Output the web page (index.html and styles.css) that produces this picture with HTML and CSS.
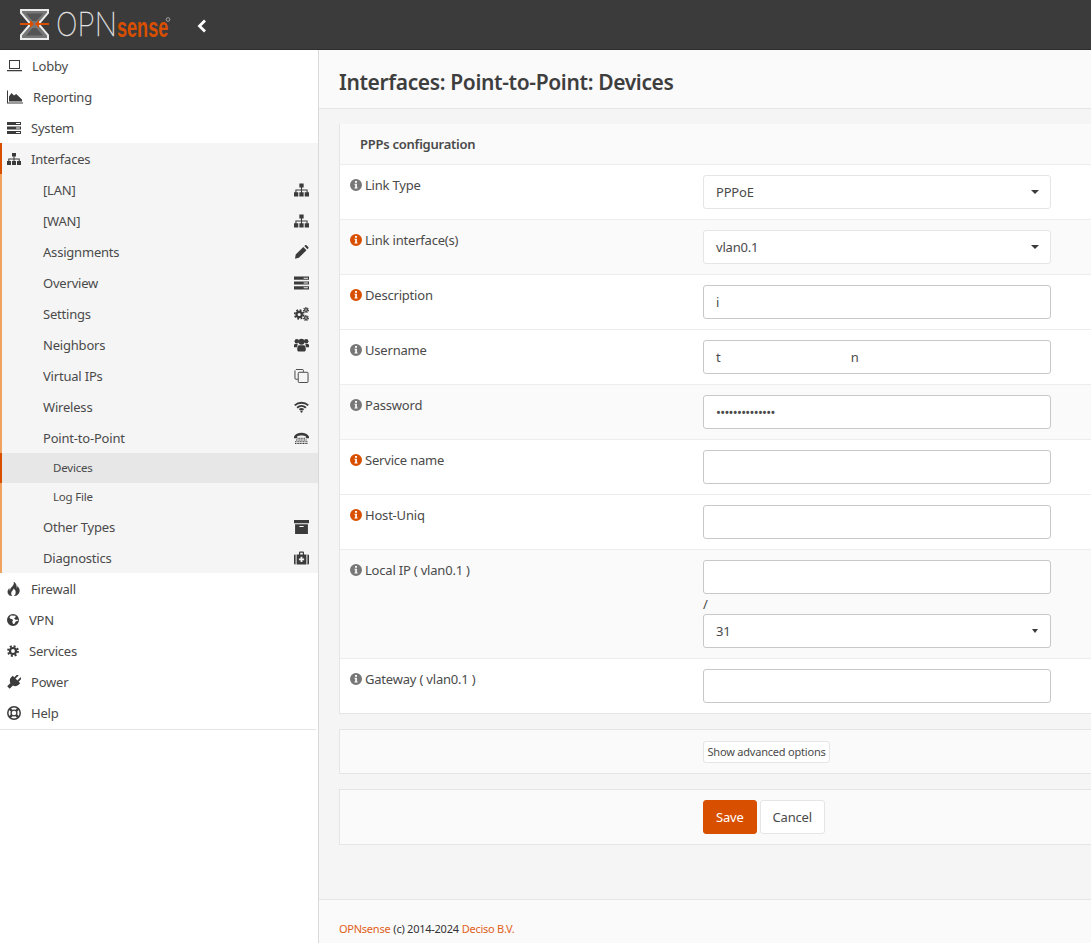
FILE: index.html
```html
<!DOCTYPE html>
<html lang="en">
<head>
  <meta charset="UTF-8" />
  <title>Interfaces: Point-to-Point: Devices</title>
  <link rel="stylesheet" href="styles.css">
</head>
<body>

  <!-- Icon set -->
  <svg class="icon-defs" aria-hidden="true">
    <symbol id="i-laptop" viewBox="0 0 15 12"><path d="M2 0h11v9H2zM3 1v7h9V1zM0 10h15v1.2H0z" fill-rule="evenodd"/></symbol>
    <symbol id="i-area" viewBox="0 0 16 13"><path d="M0 0h1v12h15v1H0zM2 11V6l2.500-3.500L7 5l2.200-1.500L15 9v2z"/></symbol>
    <symbol id="i-server" viewBox="0 0 14 12"><path d="M0 0h14v3H0zM9 1v1h4V1zM0 4.500h14v3H0zM9 5.500v1h4v-1zM0 9h14v3H0zM9 10v1h4v-1z" fill-rule="evenodd"/></symbol>
    <symbol id="i-sitemap" viewBox="0 0 14 12"><path d="M5 0h4v3.600H7.500v1.900h5.200V8h-1V6.500H7.500V8h-1V6.500H2.300V8h-1V5.500h5.200V3.600H5zM0 8h4v4H0zM5 8h4v4H5zM10 8h4v4h-4z"/></symbol>
    <symbol id="i-pencil" viewBox="0 0 14 14"><path d="M1.200 9.600 8.800 2l3.200 3.200-7.600 7.600-3.900 1zM9.800 1l.6-.6a1.300 1.300 0 0 1 1.800 0l1.400 1.400a1.300 1.300 0 0 1 0 1.800l-.6.6z"/></symbol>
    <symbol id="i-gears" viewBox="0 0 15 14"><g fill="none" stroke="currentColor"><circle cx="5.200" cy="7.500" r="2.700" stroke-width="2.200"/><circle cx="5.200" cy="7.500" r="4.400" stroke-width="1.800" stroke-dasharray="1.800 1.650"/><circle cx="12" cy="3" r="1.400" stroke-width="1.300"/><circle cx="12" cy="3" r="2.400" stroke-width="1.100" stroke-dasharray="1.100 .8"/><circle cx="12" cy="11" r="1.400" stroke-width="1.300"/><circle cx="12" cy="11" r="2.400" stroke-width="1.100" stroke-dasharray="1.100 .8"/></g></symbol>
    <symbol id="i-users" viewBox="0 0 16 14"><circle cx="3" cy="3" r="2.400"/><circle cx="13" cy="3" r="2.400"/><circle cx="8" cy="3.600" r="3.200"/><path d="M0 6.600C1 5.400 3 5.300 4 6.200 3.600 7.400 3.400 8.500 3.400 9.500H0zM16 6.600C15 5.400 13 5.300 12 6.200c.4 1.200.6 2.300.6 3.300H16zM5 7.200h6c1 .8 1.600 2.400 1.600 4.600 0 1.400-.8 2.200-2 2.200H5.400c-1.200 0-2-.8-2-2.200 0-2.200.6-3.800 1.600-4.600z"/></symbol>
    <symbol id="i-copy" viewBox="0 0 15 15"><path d="M1.500.5h7a1 1 0 0 1 1 1V3M3.500 11h-2a1 1 0 0 1-1-1V1.500" fill="none" stroke="currentColor"/><rect x="4" y="3.500" width="10.500" height="11" rx="1" fill="none" stroke="currentColor"/></symbol>
    <symbol id="i-wifi" viewBox="0 0 16 12"><g fill="none" stroke="currentColor" stroke-width="2"><path d="M.8 4.300C4.800.6 11.200.6 15.200 4.300"/><path d="M3.300 6.800c2.800-2.400 6.600-2.400 9.400 0"/><path d="M5.800 9c1.300-1 3.100-1 4.400 0"/></g><circle cx="8" cy="10.800" r="1.200"/></symbol>
    <symbol id="i-phone" viewBox="0 0 15 12"><path d="M0 4.800C2-.6 13-.6 15 4.800v1.400h-3.200V4.200C10 3.300 5 3.300 3.200 4.200v2H0z"/><g fill="none" stroke="currentColor" stroke-width="1.100" stroke-dasharray="1.100 .5"><path d="M3.500 6.200h8M2 8h11M1 9.800h13M1 11.500h13"/></g></symbol>
    <symbol id="i-archive" viewBox="0 0 14 13"><path d="M0 0h14v3H0zM1 4h12v9H1zM5 5.500v1h4v-1z" fill-rule="evenodd"/></symbol>
    <symbol id="i-medkit" viewBox="0 0 15 13"><path d="M0 4a1 1 0 0 1 1-1h.6v10H1a1 1 0 0 1-1-1zM15 4a1 1 0 0 0-1-1h-.6v10h.6a1 1 0 0 0 1-1zM5 3V1.200C5 .5 5.500 0 6.200 0h2.600C9.500 0 10 .5 10 1.200V3h2.400v10H2.600V3zM6.200 1.200V3h2.600V1.200zM6.600 5.200v1.700H4.900v1.800h1.700v1.700h1.800V8.700h1.700V6.900H8.400V5.200z" fill-rule="evenodd"/></symbol>
    <symbol id="i-fire" viewBox="0 0 14 14"><path d="M7 0c.6 2.400-1 3.800-2.300 5.300C3.600 6.500 3 7.500 3.300 8.800 2.500 8.300 2.200 7.500 2.200 6.700.6 8.300.3 10.800 1.800 12.600c1 1 2 1.400 3.200 1.400C3.800 12.800 3.500 11 4.500 9.500 5.300 8.400 6.300 7.700 6.500 6c1.600 1.500 2.800 3 2.400 5-.2 1.200-.8 2.300-1.700 3 2.600-.2 5-2 5.200-4.900C12.500 7 11.600 5.500 10.500 4.400c0 .9-.3 1.500-1 2C9.600 3.800 9 1.300 7 0z" stroke="currentColor" stroke-width=".5"/></symbol>
    <symbol id="i-globe" viewBox="0 0 12 12"><path d="M6 0a6 6 0 1 1 0 12A6 6 0 0 1 6 0zM4 1.500 2.400 3.300l1 1.500 1.900.5.700 1.300-.8 1.200.9 2.300 1.400-.3 1.200-2.200 2.700-1.200-1-.8-1.500.3L7 4.300l1.400-.8.300-1.800z" fill-rule="evenodd"/></symbol>
    <symbol id="i-cog" viewBox="0 0 12 12"><circle cx="6" cy="6" r="3" fill="none" stroke="currentColor" stroke-width="2.200"/><circle cx="6" cy="6" r="4.900" fill="none" stroke="currentColor" stroke-width="2" stroke-dasharray="2 1.850"/></symbol>
    <symbol id="i-plug" viewBox="-1 -1 16 16"><g transform="rotate(45 7 7)"><path d="M3.500-2h2v5h-2zM8.500-2h2v5h-2zM1 3h12v2.500c0 2.600-1.600 4.600-4 5.200V16H5v-5.300C2.600 10.100 1 8.100 1 5.500z"/></g></symbol>
    <symbol id="i-help" viewBox="0 0 14 14"><g fill="none" stroke="currentColor"><circle cx="7" cy="7" r="6.200" stroke-width="1.500"/><circle cx="7" cy="7" r="2.900" stroke-width="1.300"/><path d="M2.800 2.800 5 5M11.200 2.800 9 5M2.800 11.200 5 9M11.200 11.200 9 9" stroke-width="2.400"/></g></symbol>
    <symbol id="i-info" viewBox="0 0 12 12"><path d="M6 0a6 6 0 1 1 0 12A6 6 0 0 1 6 0zM5 2v1.700h2V2zM4.500 4.800v1h.7v2.600h-.7v1.100h3.100V8.400h-.7V4.800z" fill-rule="evenodd"/></symbol>
  </svg>

  <!-- Top bar -->
  <header class="topbar">
    <svg class="logo" viewBox="0 -8.500 152 49" width="152" height="49" role="img" aria-label="OPNsense">
      <path d="M1 1.500h27v3L18.500 15.500l9.500 11v4H1v-4l9.500-11L1 4.500z" fill="#777" stroke="#ececec" stroke-width="2"/>
      <path d="M6 5h17l-6.500 7.500h-4zM6 27l6.500-7.500h4L23 27z" fill="#555"/>
      <path d="M0 14.500h10v-3l4 4-4 4v-3H0zM29 14.500H19v-3l-4 4 4 4v-3h10z" fill="#d94f00"/>
      <text class="logo-opn" transform="translate(36 27) scale(.87 1)">OPN</text>
      <text class="logo-sense" transform="translate(97 28) scale(.67 1)">sense</text>
      <circle cx="148" cy="11" r="1.800" fill="none" stroke="#bbb" stroke-width=".8"/>
    </svg>
    <svg class="collapse" viewBox="0 0 10 14" width="10" height="14"><path d="M8 1.500 2.500 7 8 12.500" fill="none" stroke="#fff" stroke-width="2.800"/></svg>
  </header>

  <div class="layout">

    <!-- Sidebar -->
    <nav class="sidebar">
      <a class="nav-item"><svg class="nav-icon w15"><use href="#i-laptop"/></svg>Lobby</a>
      <a class="nav-item"><svg class="nav-icon w16"><use href="#i-area"/></svg>Reporting</a>
      <a class="nav-item"><svg class="nav-icon w14"><use href="#i-server"/></svg>System</a>

      <div class="nav-group">
        <a class="nav-item accent"><svg class="nav-icon w14"><use href="#i-sitemap"/></svg>Interfaces</a>
        <a class="sub-item">[LAN]<svg class="sub-icon"><use href="#i-sitemap"/></svg></a>
        <a class="sub-item">[WAN]<svg class="sub-icon"><use href="#i-sitemap"/></svg></a>
        <a class="sub-item">Assignments<svg class="sub-icon"><use href="#i-pencil"/></svg></a>
        <a class="sub-item">Overview<svg class="sub-icon"><use href="#i-server"/></svg></a>
        <a class="sub-item">Settings<svg class="sub-icon"><use href="#i-gears"/></svg></a>
        <a class="sub-item">Neighbors<svg class="sub-icon"><use href="#i-users"/></svg></a>
        <a class="sub-item">Virtual IPs<svg class="sub-icon"><use href="#i-copy"/></svg></a>
        <a class="sub-item">Wireless<svg class="sub-icon"><use href="#i-wifi"/></svg></a>
        <a class="sub-item">Point-to-Point<svg class="sub-icon"><use href="#i-phone"/></svg></a>
        <a class="leaf-item active">Devices</a>
        <a class="leaf-item">Log File</a>
        <a class="sub-item">Other Types<svg class="sub-icon"><use href="#i-archive"/></svg></a>
        <a class="sub-item">Diagnostics<svg class="sub-icon"><use href="#i-medkit"/></svg></a>
      </div>

      <a class="nav-item"><svg class="nav-icon w14"><use href="#i-fire"/></svg>Firewall</a>
      <a class="nav-item"><svg class="nav-icon w12"><use href="#i-globe"/></svg>VPN</a>
      <a class="nav-item"><svg class="nav-icon w12"><use href="#i-cog"/></svg>Services</a>
      <a class="nav-item"><svg class="nav-icon w14"><use href="#i-plug"/></svg>Power</a>
      <a class="nav-item last"><svg class="nav-icon w14"><use href="#i-help"/></svg>Help</a>
    </nav>

    <!-- Main content -->
    <main class="content">
      <div class="page-title">
        <h1>Interfaces: Point-to-Point: Devices</h1>
      </div>

      <section class="panel">
        <div class="panel-heading">PPPs configuration</div>

        <div class="form-row">
          <label class="form-label"><svg class="info"><use href="#i-info"/></svg>Link Type</label>
          <div class="form-field"><div class="select">PPPoE<span class="caret"></span></div></div>
        </div>
        <div class="form-row alt">
          <label class="form-label"><svg class="info hot"><use href="#i-info"/></svg>Link interface(s)</label>
          <div class="form-field"><div class="select">vlan0.1<span class="caret"></span></div></div>
        </div>
        <div class="form-row">
          <label class="form-label"><svg class="info hot"><use href="#i-info"/></svg>Description</label>
          <div class="form-field"><input class="text-input" type="text" value="i" /></div>
        </div>
        <div class="form-row">
          <label class="form-label"><svg class="info"><use href="#i-info"/></svg>Username</label>
          <div class="form-field"><input class="text-input" type="text" value="t                                         n" /></div>
        </div>
        <div class="form-row alt">
          <label class="form-label"><svg class="info"><use href="#i-info"/></svg>Password</label>
          <div class="form-field"><input class="text-input secret" type="password" value="12345678901234" /></div>
        </div>
        <div class="form-row">
          <label class="form-label"><svg class="info hot"><use href="#i-info"/></svg>Service name</label>
          <div class="form-field"><input class="text-input" type="text" /></div>
        </div>
        <div class="form-row">
          <label class="form-label"><svg class="info hot"><use href="#i-info"/></svg>Host-Uniq</label>
          <div class="form-field"><input class="text-input" type="text" /></div>
        </div>
        <div class="form-row alt">
          <label class="form-label"><svg class="info"><use href="#i-info"/></svg>Local IP ( vlan0.1 )</label>
          <div class="form-field">
            <input class="text-input" type="text" />
            <div class="slash">/</div>
            <div class="select">31<span class="caret small"></span></div>
          </div>
        </div>
        <div class="form-row">
          <label class="form-label"><svg class="info"><use href="#i-info"/></svg>Gateway ( vlan0.1 )</label>
          <div class="form-field"><input class="text-input" type="text" /></div>
        </div>
      </section>

      <section class="panel action-bar slim">
        <button class="btn btn-xs">Show advanced options</button>
      </section>

      <section class="panel action-bar">
        <button class="btn btn-primary">Save</button>
        <button class="btn">Cancel</button>
      </section>

      <footer class="page-footer">
        <a>OPNsense</a> (c) 2014-2024 <a>Deciso B.V.</a>
      </footer>
    </main>
  </div>

</body>
</html>
```

FILE: styles.css
```css
/* Basic Reset */
* {
  margin: 0;
  padding: 0;
  box-sizing: border-box;
}

body {
  height: 943px;
  overflow: hidden;
  display: flex;
  flex-direction: column;
  background: #fff;
  color: #4a4a4a;
  font-family: "Noto Sans", "Open Sans", sans-serif;
  font-size: 13px;
  letter-spacing: -0.2px;
}

.icon-defs {
  display: none;
}

/* Top bar */
.topbar {
  height: 50px;
  flex: none;
  display: flex;
  align-items: center;
  background: #3b3b3b;
  border-bottom: 1px solid #2e2e2e;
  padding-left: 20px;
}

.logo {
  flex: none;
}

.logo-opn {
  font-family: "Inter", sans-serif;
  font-weight: 100;
  font-size: 33px;
  letter-spacing: 0;
  fill: #e6e6e6;
  stroke: #e6e6e6;
  stroke-width: 0.4px;
}

.logo-sense {
  font-family: "Liberation Sans", sans-serif;
  font-weight: 700;
  font-size: 27px;
  letter-spacing: 0;
  fill: #d94f00;
}

.collapse {
  margin-left: 25px;
  margin-top: 3px;
}

.layout {
  flex: 1;
  display: flex;
  min-height: 0;
}

/* Sidebar */
.sidebar {
  width: 319px;
  flex: none;
  background: #fff;
  border-right: 1px solid #d9d9d9;
}

.nav-item,
.sub-item,
.leaf-item {
  display: flex;
  align-items: center;
  border-left: 2px solid transparent;
  height: 31px;
  color: #4a4a4a;
}

.nav-item {
  padding-left: 5px;
}

.nav-item.accent {
  border-left-color: #d94f00;
}

.nav-item.last {
  border-bottom: 1px solid #e5e5e5;
  height: 33px;
  margin-right: 2px;
  border-left: none;
  padding-left: 7px;
}

.nav-icon {
  height: 14px;
  margin-right: 10px;
  flex: none;
  fill: currentColor;
  color: #3b3b3b;
}

.w12 { width: 12px; }
.w14 { width: 14px; }
.w15 { width: 15px; }
.w16 { width: 16px; }

.nav-group {
  background: #f5f5f5;
}

.sub-item {
  padding-left: 41px;
  padding-right: 9px;
  border-left-color: #f0a35e;
  justify-content: space-between;
}

.sub-icon {
  width: 15px;
  height: 14px;
  flex: none;
  fill: currentColor;
  color: #3b3b3b;
}

.leaf-item {
  height: 28.5px;
  padding-left: 51px;
  font-size: 11.5px;
  border-left-color: #f0a35e;
}

.leaf-item.active {
  height: 29.5px;
  background: #e7e7e7;
  border-left-color: #d94f00;
}

/* Main content */
.content {
  flex: 1;
  min-width: 0;
  display: flex;
  flex-direction: column;
  background: #f5f5f5;
}

.page-title {
  height: 59px;
  flex: none;
  display: flex;
  align-items: center;
  padding: 5px 0 0 20px;
  background: #fafafa;
  border-bottom: 1px solid #e5e5e5;
}

h1 {
  font-size: 21px;
  font-weight: 600;
  color: #3e3e3e;
  letter-spacing: -0.36px;
}

.panel {
  margin: 15px -20px 0 20px;
  background: #fff;
  border-left: 1px solid #e5e5e5;
  border-bottom: 1px solid #e5e5e5;
  flex: none;
}

.panel-heading {
  height: 41px;
  display: flex;
  align-items: center;
  padding-left: 20px;
  font-weight: 600;
  letter-spacing: -0.25px;
  background: #fafafa;
  border-bottom: 1px solid #ededed;
}

.form-row {
  display: flex;
  padding: 10px 0;
  border-bottom: 1px solid #ededed;
}

.form-row:last-child {
  border-bottom: none;
}

.form-row.alt {
  background: #fafafa;
}

.form-label {
  width: 363px;
  flex: none;
  display: flex;
  align-items: center;
  height: 20px;
  padding-left: 10px;
}

.info {
  width: 12px;
  height: 12px;
  margin-right: 3px;
  flex: none;
  fill: #777;
}

.info.hot {
  fill: #d94f00;
}

.form-field {
  width: 348px;
}

.text-input,
.select {
  display: flex;
  align-items: center;
  width: 100%;
  height: 34px;
  padding: 0 12px;
  background: #fff;
  border: 1px solid #c8c8c8;
  border-radius: 3px;
  color: #4a4a4a;
  font: inherit;
  letter-spacing: inherit;
}

.select {
  justify-content: space-between;
  border-color: #e5e5e5;
}

.form-row .slash + .select {
  border-color: #c8c8c8;
}

.secret {
  letter-spacing: -0.7px;
}

.caret {
  width: 0;
  height: 0;
  margin-right: -1px;
  border-left: 4px solid transparent;
  border-right: 4px solid transparent;
  border-top: 4px solid #3b3b3b;
}

.caret.small {
  margin-right: 0;
  border-left-width: 3px;
  border-right-width: 3px;
  border-top-width: 4px;
}

.slash {
  height: 20px;
  line-height: 20px;
}

/* Button rows */
.action-bar {
  display: flex;
  gap: 3px;
  align-items: center;
  height: 56px;
  padding-left: 363px;
  background: #fafafa;
  border: 1px solid #e5e5e5;
  border-right: none;
}

.action-bar.slim {
  height: 45px;
}

.btn {
  height: 34px;
  padding: 0 12px;
  background: #fff;
  border: 1px solid #e5e5e5;
  border-radius: 3px;
  color: #4a4a4a;
  font: inherit;
  letter-spacing: inherit;
}

.btn-primary {
  background: #d94f00;
  border-color: #d94f00;
  color: #fff;
}

.btn-xs {
  height: 22px;
  padding: 0 3.500px;
  font-size: 11px;
}

/* Footer */
.page-footer {
  margin-top: auto;
  height: 44px;
  flex: none;
  display: flex;
  align-items: flex-end;
  gap: 3px;
  padding: 0 0 7px 20px;
  background: #fafafa;
  border-top: 1px solid #e5e5e5;
  font-size: 11px;
  letter-spacing: -0.25px;
  color: #333;
}

.page-footer a {
  color: #e0601a;
}
```
